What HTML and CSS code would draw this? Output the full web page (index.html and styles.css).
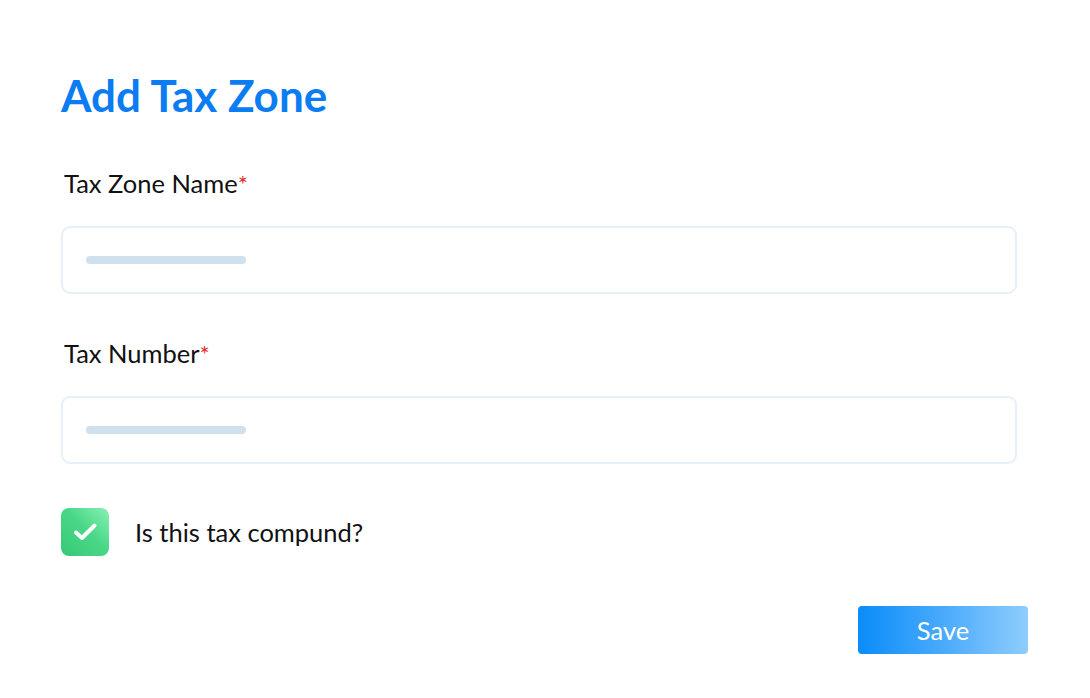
FILE: index.html
```html
<!DOCTYPE html>
<html>
<head>
<meta charset="utf-8">
<link rel="stylesheet" href="styles.css">
</head>
<body>
<div class="page">
  <h1 class="title">Add Tax Zone</h1>
  <div class="field">
    <label class="label">Tax Zone Name<span class="req">*</span></label>
    <div class="input"><span class="ph"></span></div>
  </div>
  <div class="field">
    <label class="label">Tax Number<span class="req">*</span></label>
    <div class="input"><span class="ph"></span></div>
  </div>
  <div class="check-row">
    <span class="checkbox">
      <svg width="48" height="48" viewBox="0 0 48 48"><path d="M15 24.5 L21 30 L33.5 17.5" fill="none" stroke="#fff" stroke-width="4" stroke-linecap="round" stroke-linejoin="round"/></svg>
    </span>
    <span class="check-label">Is this tax compund?</span>
  </div>
  <div class="actions">
    <button class="save">Save</button>
  </div>
</div>
</body>
</html>
```

FILE: styles.css
```css
html, body {
  margin: 0;
  padding: 0;
  background: #ffffff;
}
body {
  font-family: Lato, "Open Sans", sans-serif;
  color: #111;
}
.page {
  width: 956px;
  padding: 68px 0 0 61px;
}
.title {
  margin: 0;
  font-size: 44px;
  font-weight: 700;
  color: #0b7cf1;
  line-height: 54px;
}
.field {
  display: flex;
  flex-direction: column;
}
.label {
  font-size: 25.5px;
  line-height: 30px;
  padding-left: 3px;
  margin-top: 46px;
  color: #111;
}
.field + .field .label {
  margin-top: 44px;
}
.req {
  color: #e52b2b;
  font-size: 24px;
}
.input {
  margin-top: 27px;
  height: 64px;
  border: 2px solid #e8eff8;
  border-radius: 9px;
  display: flex;
  align-items: center;
  padding-left: 23px;
}
.ph {
  width: 160px;
  height: 8px;
  border-radius: 4px;
  background: #cfe1ee;
}
.check-row {
  margin-top: 44px;
  display: flex;
  align-items: center;
}
.checkbox {
  width: 48px;
  height: 48px;
  border-radius: 8px;
  background: linear-gradient(to bottom left, #8af0b4 0%, #4ad888 45%, #36c874 100%);
  display: flex;
}
.check-label {
  margin-left: 26px;
  font-size: 25.5px;
  color: #111;
}
.actions {
  display: flex;
  justify-content: flex-end;
  margin-top: 50px;
  margin-right: -11px;
}
.save {
  width: 170px;
  height: 48px;
  border: none;
  border-radius: 4px;
  background: linear-gradient(90deg, #0a8cfa 0%, #49aafb 50%, #8fcdfd 100%);
  color: #fff;
  font-family: Lato, sans-serif;
  font-size: 25.5px;
  padding: 0;
}
```
